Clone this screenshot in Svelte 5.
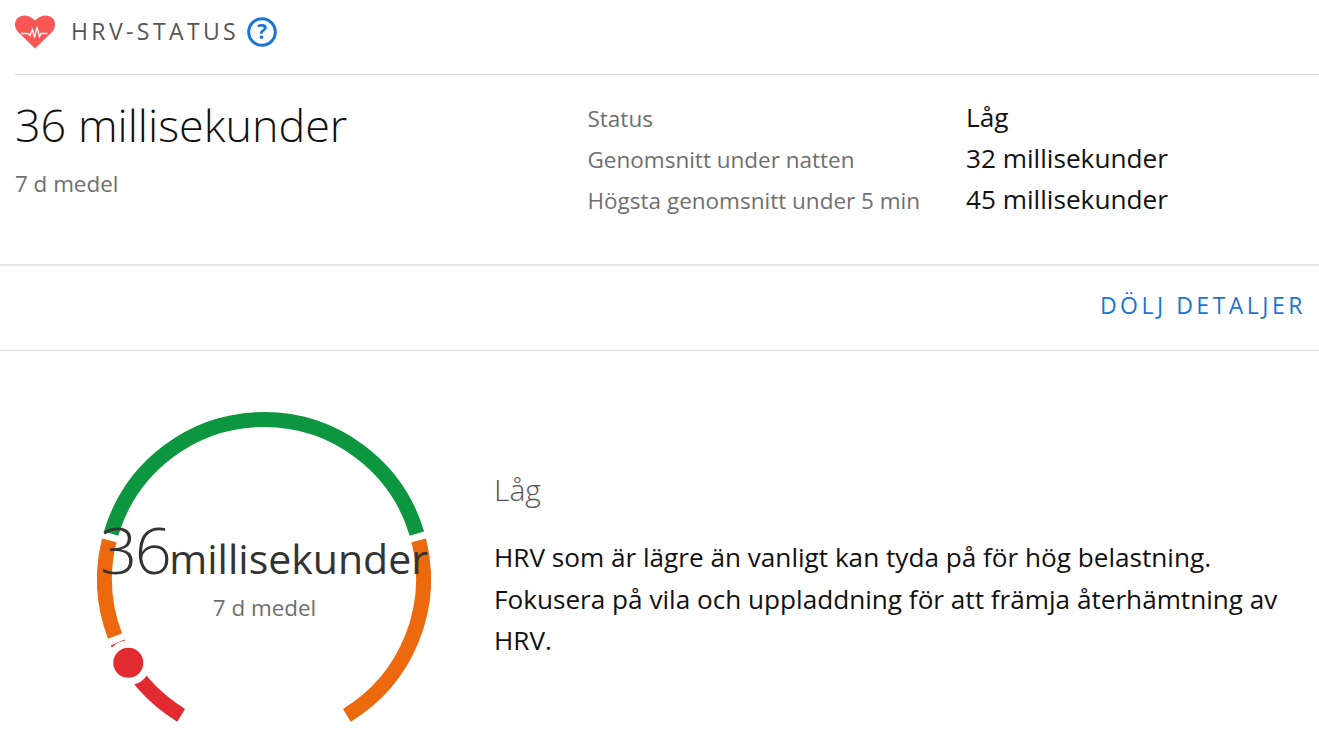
<script>
  const cx = 167;
  const cy = 167;
  const r = 159.5;

  function point(deg) {
    const a = (deg * Math.PI) / 180;
    return [cx + r * Math.sin(a), cy - r * Math.cos(a)];
  }

  function arc(from, to) {
    const [x1, y1] = point(from);
    const [x2, y2] = point(to);
    const large = to - from > 180 ? 1 : 0;
    return `M${x1} ${y1}A${r} ${r} 0 ${large} 1 ${x2} ${y2}`;
  }

  const segments = [
    { color: "#0c963f", d: arc(-73.5, 73.5) },
    { color: "#ec690d", d: arc(76, 148.7) },
    { color: "#ec690d", d: arc(-111, -76) },
    { color: "#e12b30", d: arc(-148.7, -113.5) }
  ];
  const marker = point(-121.7);

  const stats = [
    ["Status", "Låg"],
    ["Genomsnitt under natten", "32 millisekunder"],
    ["Högsta genomsnitt under 5 min", "45 millisekunder"]
  ];
</script>

<div class="page">
  <header class="title-row">
    <svg class="heart" viewBox="0 0 40 34" width="40" height="34">
      <path fill="#f95656" d="M20 33.500 3 17C-1 12.500-1 6 3 2.800 7.500-1 14-.5 20 5.500 26-.5 32.500-1 37 2.800c4 3.200 4 9.700 0 14.200z" />
      <path fill="none" stroke="#fff" stroke-width="1.300" d="M6 18.500h7l2 2 2.500-6 2 8 2.500-10.500 2.500 10 1.500-3.500h6.500" />
    </svg>
    <h1>HRV-STATUS</h1>
    <svg class="help" viewBox="0 0 30 30" width="30" height="30">
      <circle cx="15" cy="15" r="13.300" fill="none" stroke="#1a76d2" stroke-width="3" />
      <text x="15" y="22" text-anchor="middle">?</text>
    </svg>
  </header>

  <section class="summary">
    <div class="headline">
      <div class="big">36 millisekunder</div>
      <div class="sub">7 d medel</div>
    </div>
    <dl class="stats">
      {#each stats as [label, value]}
        <dt>{label}</dt>
        <dd>{value}</dd>
      {/each}
    </dl>
  </section>

  <div class="toggle-row">
    <a class="toggle" href="#details">DÖLJ DETALJER</a>
  </div>

  <section class="details">
    <div class="gauge">
      <svg viewBox="0 0 334 334" width="334" height="334">
        {#each segments as seg}
          <path d={seg.d} fill="none" stroke={seg.color} stroke-width="15" />
        {/each}
        <circle cx={marker[0]} cy={marker[1]} r="22.500" fill="#fff" />
        <circle cx={marker[0]} cy={marker[1]} r="15" fill="#e12b30" />
      </svg>
      <div class="reading">
        <div class="value"><span class="num">36</span><span class="unit">millisekunder</span></div>
        <div class="avg">7 d medel</div>
      </div>
    </div>
    <div class="text">
      <h2>Låg</h2>
      <p>HRV som är lägre än vanligt kan tyda på för hög belastning. Fokusera på vila och uppladdning för att främja återhämtning av HRV.</p>
    </div>
  </section>
</div>

<style>
  :global(body) {
    margin: 0;
    background: #fff;
    font-family: "Open Sans", sans-serif;
  }

  .page {
    width: 1319px;
    height: 744px;
    overflow: hidden;
  }

  .title-row {
    display: flex;
    align-items: center;
    height: 74px;
    margin-left: 15px;
    border-bottom: 1px solid #ddd;
  }

  .heart {
    margin-top: -10px;
  }

  h1 {
    margin: -12px 0 0 16px;
    font-size: 23px;
    font-weight: 400;
    letter-spacing: 3.400px;
    color: #555;
  }

  .help {
    margin: -11px 0 0 8px;
  }

  .help text {
    font-size: 21px;
    font-weight: 700;
    fill: #1a76d2;
  }

  .summary {
    display: flex;
    height: 189px;
    padding-left: 15px;
    border-bottom: 2px solid #e6e6e6;
  }

  .headline {
    width: 573px;
  }

  .big {
    margin-top: 20px;
    font-size: 44.900px;
    font-weight: 300;
    line-height: 60px;
    color: #111;
  }

  .sub {
    margin-top: 14px;
    font-size: 22.400px;
    line-height: 30px;
    color: #6f6f6f;
  }

  .stats {
    display: grid;
    grid-template-columns: 378px auto;
    grid-auto-rows: 41px;
    align-content: start;
    margin: 23px 0 0;
    font-size: 22.500px;
    line-height: 41px;
  }

  dt {
    margin-left: -0.5px;
    color: #6f6f6f;
  }

  dd {
    margin: -1px 0 0;
    font-size: 26.200px;
    color: #111;
  }

  .toggle-row {
    display: flex;
    justify-content: flex-end;
    align-items: center;
    height: 84px;
    padding-right: 13px;
    border-bottom: 1px solid #ddd;
  }

  .toggle {
    margin-top: -6px;
    font-size: 23px;
    letter-spacing: 3.500px;
    color: #1a76d2;
    text-decoration: none;
  }

  .details {
    display: flex;
    padding: 61px 0 0 97px;
  }

  .gauge {
    position: relative;
    width: 334px;
    height: 334px;
    flex: none;
  }

  .gauge svg {
    display: block;
  }

  .reading {
    position: absolute;
    top: 92px;
    left: 0;
    right: 0;
    text-align: center;
  }

  .value {
    display: flex;
    justify-content: center;
    align-items: baseline;
    white-space: nowrap;
    line-height: 90px;
    color: #333;
  }

  .num {
    font-size: 65px;
    font-weight: 300;
    letter-spacing: -2.500px;
  }

  .unit {
    font-size: 41px;
  }

  .avg {
    margin: -10px 0 0 1px;
    font-size: 22.400px;
    line-height: 30px;
    color: #6f6f6f;
  }

  .text {
    margin-left: 63px;
    padding-top: 57px;
  }

  h2 {
    margin: 0;
    font-size: 30px;
    font-weight: 300;
    line-height: 42px;
    color: #555;
  }

  p {
    margin: 26px 0 0;
    width: 810px;
    font-size: 26.150px;
    line-height: 41.500px;
    color: #111;
  }
</style>
